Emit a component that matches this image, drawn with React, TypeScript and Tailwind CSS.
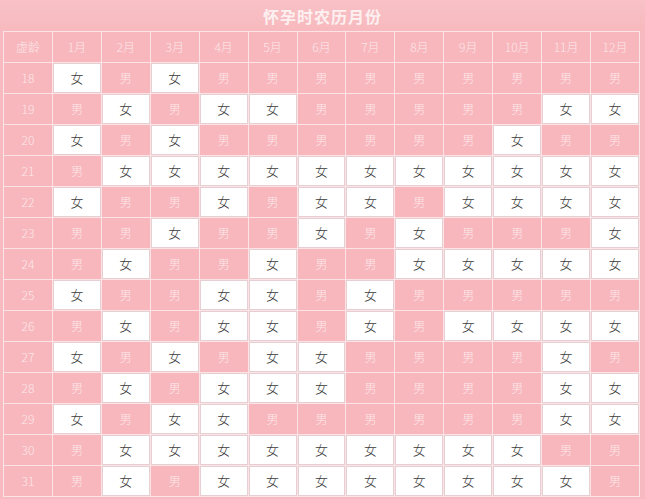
import React from 'react';

const months = ['1月', '2月', '3月', '4月', '5月', '6月', '7月', '8月', '9月', '10月', '11月', '12月'];

// 女 = F, 男 = M
const chart: [number, string][] = [
  [18, 'FMFMMMMMMMMM'],
  [19, 'MFMFFMMMMMFF'],
  [20, 'FMFMMMMMMFMM'],
  [21, 'MFFFFFFFFFFF'],
  [22, 'FMMFMFFMFFFF'],
  [23, 'MMFMMFMFMMMF'],
  [24, 'MFMMFMMFFFFF'],
  [25, 'FMMFFMFMMMMM'],
  [26, 'MFMFFMFMFFFF'],
  [27, 'FMFMFFMMMMFM'],
  [28, 'MFMFFFMMMMFF'],
  [29, 'FMFFMMMMMMFF'],
  [30, 'MFFFFFFFFFMM'],
  [31, 'MFMFFFFFFFFM'],
];

const font = { fontFamily: '"Noto Sans CJK SC", "Liberation Sans", sans-serif' };

function PinkCell({ children }: { children: React.ReactNode }) {
  return (
    <div className="flex items-center justify-center bg-[#f7b7bd] text-[12px] font-light text-[#fde8ea]">
      {children}
    </div>
  );
}

function WhiteCell() {
  return (
    <div className="flex items-center justify-center border border-[#e6cfd2] bg-white text-[13px] font-light text-[#3a3a3a]">
      女
    </div>
  );
}

export default function App() {
  return (
    <div className="w-[645px] h-[499px] overflow-hidden bg-[#f7bac0]" style={font}>
      <div className="h-[31px] flex items-center justify-center bg-gradient-to-b from-[#f8c2c6] to-[#f7b9be]">
        <span className="text-[16px] font-bold tracking-[1px] text-[#fdf0f1]">怀孕时农历月份</span>
      </div>
      <div className="ml-[3px] w-[637px] grid grid-cols-[repeat(13,minmax(0,1fr))] auto-rows-[30px] gap-px p-px bg-[#fbe3e6]">
        <PinkCell>虚龄</PinkCell>
        {months.map((m) => (
          <PinkCell key={m}>{m}</PinkCell>
        ))}
        {chart.map(([age, row]) => (
          <React.Fragment key={age}>
            <PinkCell>{age}</PinkCell>
            {row.split('').map((c, i) =>
              c === 'F' ? <WhiteCell key={i} /> : <PinkCell key={i}>男</PinkCell>
            )}
          </React.Fragment>
        ))}
      </div>
    </div>
  );
}
